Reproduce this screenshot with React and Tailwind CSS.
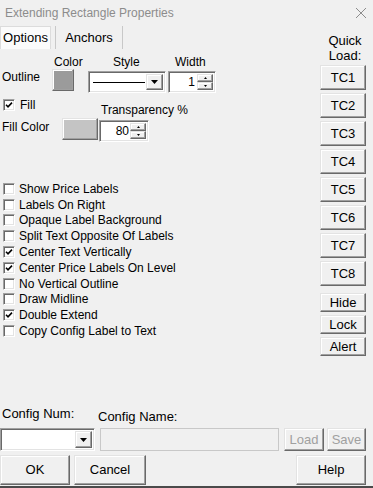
import React from "react";

const raised =
  "border border-t-[#e3e3e3] border-l-[#e3e3e3] border-r-[#696969] border-b-[#696969] shadow-[inset_-1px_-1px_#a0a0a0,inset_1px_1px_#ffffff]";
const sunken =
  "border border-t-[#a0a0a0] border-l-[#a0a0a0] border-r-white border-b-white shadow-[inset_1px_1px_#696969,inset_-1px_-1px_#e3e3e3]";

function Btn({ children, className = "", disabled = false }) {
  return (
    <div
      className={`${raised} bg-[#f0f0f0] flex items-center justify-center text-[13px] ${
        disabled ? "text-[#a0a0a0]" : "text-black"
      } ${className}`}
    >
      {children}
    </div>
  );
}

function Check({ checked }) {
  return (
    <div className={`${sunken} w-[12px] h-[12px] bg-white flex items-center justify-center shrink-0`}>
      {checked && (
        <svg width="8" height="8" viewBox="0 0 8 8">
          <path d="M1 3.8 L3 5.8 L7 1.6" fill="none" stroke="#000" strokeWidth="1.6" />
        </svg>
      )}
    </div>
  );
}

function DownArrowBtn({ className = "" }) {
  return (
    <div className={`${raised} bg-[#f0f0f0] flex items-center justify-center ${className}`}>
      <svg width="7" height="4" viewBox="0 0 7 4">
        <path d="M0 0 H7 L3.5 4 Z" fill="#000" />
      </svg>
    </div>
  );
}

function Spinner() {
  return (
    <div className="flex flex-col w-[16px] h-full">
      <div className={`${raised} flex-1 bg-[#f0f0f0] flex items-center justify-center`}>
        <svg width="3" height="2" viewBox="0 0 3 2">
          <path d="M0 2 H3 L1.5 0 Z" fill="#000" />
        </svg>
      </div>
      <div className={`${raised} flex-1 bg-[#f0f0f0] flex items-center justify-center`}>
        <svg width="3" height="2" viewBox="0 0 3 2">
          <path d="M0 0 H3 L1.5 2 Z" fill="#000" />
        </svg>
      </div>
    </div>
  );
}

const items = [
  ["Show Price Labels", false],
  ["Labels On Right", false],
  ["Opaque Label Background", false],
  ["Split Text Opposite Of Labels", false],
  ["Center Text Vertically", true],
  ["Center Price Labels On Level", true],
  ["No Vertical Outline", false],
  ["Draw Midline", false],
  ["Double Extend", true],
  ["Copy Config Label to Text", false],
];

export default function App() {
  return (
    <div className="w-[373px] h-[488px] bg-[#f0f0f0] flex flex-col overflow-hidden font-['Liberation_Sans',Arial,sans-serif] text-black text-[12px]">
      {/* Title bar */}
      <div className="h-[25px] flex items-center justify-between pl-[5px] pr-[5px] shrink-0">
        <span className="text-[12px] text-[#8c8c8c]">Extending Rectangle Properties</span>
        <svg width="12" height="12" viewBox="0 0 12 12" className="mr-[1px]">
          <path d="M1 1 L11 11 M11 1 L1 11" stroke="#8c8c8c" strokeWidth="1" />
        </svg>
      </div>

      {/* Main */}
      <div className="h-[380px] flex shrink-0">
        {/* Left */}
        <div className="flex-1 flex flex-col">
          {/* Tabs */}
          <div className="mt-[1px] h-[23px] flex text-[13px]">
            <div className="w-[51px] h-full bg-[#fbfbfb] border border-[#dcdcdc] border-b-0 flex items-center justify-center">
              Options
            </div>
            <div className="ml-[4px] w-[68px] h-full border-l border-r border-[#c8c8c8] flex items-center justify-center">
              Anchors
            </div>
          </div>

          {/* Header row */}
          <div className="mt-[6px] h-[14px] leading-[14px] flex pl-[54px]">
            <span className="w-[59px]">Color</span>
            <span className="w-[62px]">Style</span>
            <span>Width</span>
          </div>

          {/* Outline row */}
          <div className="h-[24px] flex items-start">
            <span className="w-[52px] pl-[2px] leading-[14px] mt-[1px]">Outline</span>
            <div className={`${raised} w-[22px] h-[22px] bg-[#9b9b9b]`} />
            <div className={`${sunken} ml-[14px] mt-[2px] w-[78px] h-[22px] bg-white flex items-center p-[2px]`}>
              <div className="flex-1 h-[1px] bg-black ml-[2px] mr-[1px]" />
              <DownArrowBtn className="w-[17px] h-full" />
            </div>
            <div className={`${sunken} ml-[2px] mt-[2px] w-[48px] h-[22px] bg-white flex items-center p-[2px]`}>
              <span className="flex-1 text-right pr-[2px] text-[12px]">1</span>
              <Spinner />
            </div>
          </div>

          {/* Fill row */}
          <div className="mt-[4px] h-[20px] flex items-start">
            <div className="w-[101px] pl-[3px] mt-[1px] h-[14px] flex items-center">
              <Check checked />
              <span className="ml-[5px] leading-[14px]">Fill</span>
            </div>
            <span className="mt-[6px] leading-[14px]">Transparency %</span>
          </div>

          {/* Fill color row */}
          <div className="h-[25px] flex items-start">
            <span className="w-[62px] pl-[2px] mt-[3px] leading-[14px]">Fill Color</span>
            <div className={`${raised} mt-[1px] w-[36px] h-[22px] bg-[#c4c4c4]`} />
            <div className={`${sunken} ml-[1px] mt-[3px] w-[50px] h-[22px] bg-white flex items-center p-[2px]`}>
              <span className="flex-1 text-right pr-[1px] text-[12px]">80</span>
              <Spinner />
            </div>
          </div>

          {/* Checkbox list */}
          <div className="mt-[39px] flex flex-col">
            {items.map(([label, checked]) => (
              <div key={label} className="h-[15.8px] flex items-center pl-[3px]">
                <Check checked={checked} />
                <span className="ml-[4px] leading-[14px]">{label}</span>
              </div>
            ))}
          </div>
        </div>

        {/* Right column */}
        <div className="w-[61px] flex flex-col pr-[7px] items-end">
          <div className="mt-[8px] w-[46px] text-center text-[13px] leading-[15px] pl-[4px] whitespace-nowrap">
            Quick
            <br />
            Load:
          </div>
          <div className="mt-[2px] flex flex-col gap-[3px]">
            {["TC1", "TC2", "TC3", "TC4", "TC5", "TC6", "TC7", "TC8"].map((t) => (
              <Btn key={t} className="w-[46px] h-[25px]">
                {t}
              </Btn>
            ))}
          </div>
          <div className="mt-[7px] flex flex-col gap-[3px]">
            {["Hide", "Lock", "Alert"].map((t) => (
              <Btn key={t} className="w-[46px] h-[19px]">
                {t}
              </Btn>
            ))}
          </div>
        </div>
      </div>

      {/* Bottom */}
      <div className="flex flex-col shrink-0">
        <div className="h-[22px] flex items-start text-[13px]">
          <span className="w-[98px] pl-[2px] mt-[2px] leading-[14px]">Config Num:</span>
          <span className="mt-[5px] leading-[14px]">Config Name:</span>
        </div>
        <div className="mt-[1px] h-[23px] flex">
          <div className={`${sunken} w-[95px] h-full bg-white flex items-center justify-end p-[2px]`}>
            <DownArrowBtn className="w-[17px] h-full" />
          </div>
          <div className="ml-[5px] w-[179px] h-full border border-[#c8c8c8] bg-[#f0f0f0]" />
          <Btn disabled className="ml-[5px] w-[40px] h-full">
            Load
          </Btn>
          <Btn disabled className="ml-[3px] w-[39px] h-full">
            Save
          </Btn>
        </div>
        <div className="mt-[4px] h-[30px] flex pr-[7px]">
          <Btn className="w-[70px] h-full">OK</Btn>
          <Btn className="ml-[4px] w-[72px] h-full">Cancel</Btn>
          <Btn className="ml-auto w-[70px] h-full">Help</Btn>
        </div>
        <div className="mt-[1px] h-[2px] bg-[#4a4a4a]" />
      </div>
    </div>
  );
}
